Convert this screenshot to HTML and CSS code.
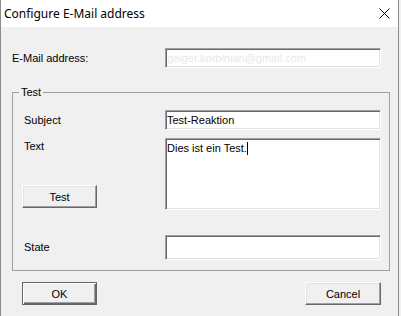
FILE: index.html
```html
<!DOCTYPE html>
<html>
<head lang="en">
    <meta charset="UTF-8">
    <title>Configure E-Mail address</title>
    <link rel="stylesheet" href="styles.css">
</head>
<body>
<div class="window">
    <div class="titlebar">
        <span class="title">Configure E-Mail address</span>
        <svg class="close" width="11" height="11" viewBox="0 0 11 11">
            <path d="M0.5 0.5 L10.5 10.5 M10.5 0.5 L0.5 10.5" stroke="#000" stroke-width="1" fill="none"/>
        </svg>
    </div>
    <div class="client">
        <div class="row row-email">
            <span class="lbl">E-Mail address:</span>
            <input class="edit" type="text" disabled value="geiger.korbinian@gmail.com">
        </div>

        <fieldset class="group">
            <legend>Test</legend>
            <div class="row row-subject">
                <span class="lbl">Subject</span>
                <input class="edit" type="text" value="Test-Reaktion">
            </div>
            <div class="row row-text">
                <div class="side">
                    <span class="lbl lbl-top">Text</span>
                    <button class="btn btn-test">Test</button>
                </div>
                <div class="edit memo">Dies ist ein Test.<span class="caret"></span></div>
            </div>
            <div class="row row-state">
                <span class="lbl">State</span>
                <input class="edit edit-tall" type="text" value="">
            </div>
        </fieldset>

        <div class="buttons">
            <button class="btn btn-default">OK</button>
            <button class="btn">Cancel</button>
        </div>
    </div>
</div>
</body>
</html>
```

FILE: styles.css
```css
* {
    box-sizing: border-box;
}

body {
    margin: 0;
    background: #f0f0f0;
    font-family: "Liberation Sans", Arial, sans-serif;
    font-size: 11px;
    color: #000;
}

.window {
    width: 399px;
    height: 316px;
    border-left: 1px solid #8c8c8c;
    border-right: 1px solid #8c8c8c;
    background: #f0f0f0;
}

.titlebar {
    height: 27px;
    padding: 0 8px 0 3px;
    background: #fff;
    display: flex;
    align-items: center;
    justify-content: space-between;
}

.title {
    font-family: "Noto Sans", sans-serif;
    font-size: 12px;
}

.close {
    display: block;
}

.client {
    padding: 21px 8px 0 11px;
}

.row {
    display: flex;
    align-items: center;
}

.lbl {
    line-height: 13px;
}

.row-email .lbl {
    width: 153px;
}

/* sunken edit boxes */
.edit {
    width: 216px;
    height: 20px;
    margin: 0;
    padding: 0 1px;
    border: 1px solid;
    border-color: #a0a0a0 #fff #fff #a0a0a0;
    box-shadow: inset 1px 1px #696969, inset -1px -1px #e3e3e3;
    background: #fff;
    font: inherit;
    color: #000;
    outline: none;
}

.edit:disabled {
    color: #e8e8e8;
    -webkit-text-fill-color: #e8e8e8;
    background: #fff;
    opacity: 1;
}

.edit-tall {
    height: 25px;
}

.group {
    margin: 18px 0 0;
    padding: 11px 8px 10px 11px;
    border: 1px solid #a0a0a0;
    min-width: 0;
}

.group legend {
    margin-left: -5px;
    padding: 0 2px;
    line-height: 13px;
}

.row-subject .lbl,
.row-state .lbl {
    width: 141px;
}

.row-text {
    margin-top: 8px;
    align-items: stretch;
}

.side {
    width: 141px;
    display: flex;
    flex-direction: column;
    justify-content: space-between;
    align-items: flex-start;
}

.lbl-top {
    padding-top: 2px;
}

.memo {
    height: 72px;
    padding: 3px 1px;
    line-height: 13px;
}

.caret {
    display: inline-block;
    width: 1px;
    height: 13px;
    vertical-align: top;
    background: #000;
}

.row-state {
    margin-top: 25px;
}

/* raised push buttons */
.btn {
    width: 76px;
    height: 23px;
    margin: 0;
    padding: 0;
    border: 1px solid;
    border-color: #fff #696969 #696969 #fff;
    box-shadow: inset -1px -1px #a0a0a0, inset 1px 1px #e3e3e3;
    background: #f0f0f0;
    font: inherit;
    color: #000;
}

.btn-test {
    width: 75px;
    margin: 0 0 2px -2px;
}

.btn-default {
    width: 75px;
    border-color: #646464;
    box-shadow: inset 1px 1px #fff, inset -1px -1px #696969, inset -2px -2px #a0a0a0;
}

.buttons {
    margin-top: 11px;
    padding: 0 9px 0 10px;
    display: flex;
    justify-content: space-between;
}
```
